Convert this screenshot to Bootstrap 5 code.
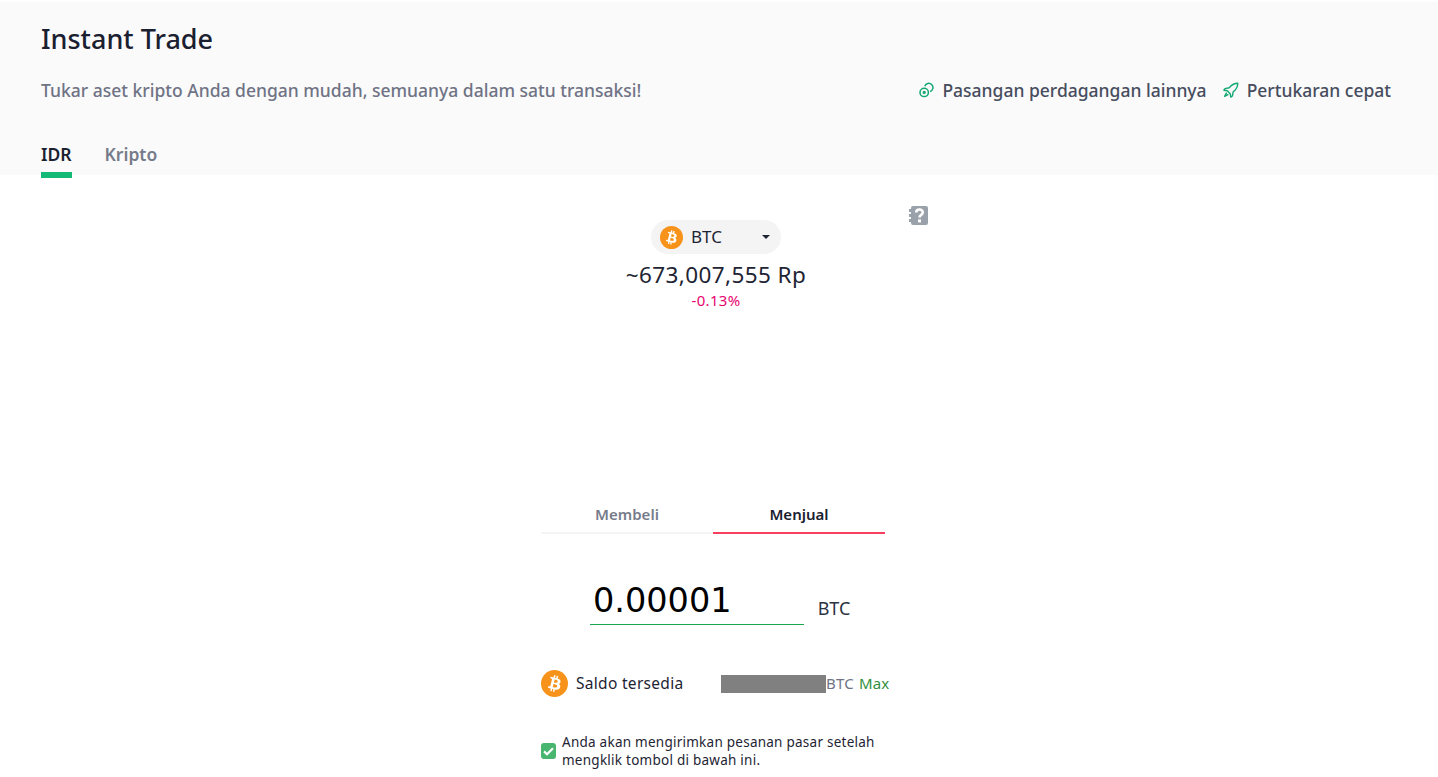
<!DOCTYPE html>
<html lang="en">

<head>
    <meta charset="UTF-8">
    <meta name="viewport" content="width=device-width, initial-scale=1.0">
    <title>Instant Trade</title>
    <link href="https://cdn.jsdelivr.net/npm/bootstrap@5.3.1/dist/css/bootstrap.min.css" rel="stylesheet">
    <style>
        body {
            font-family: "Noto Sans", "Liberation Sans", sans-serif;
            color: #1e2433;
            background: #fff;
            height: 777px;
            overflow: hidden;
        }

        .top-head {
            margin-top: 2px;
            height: 173px;
            background: #fafafa;
            padding: 19px 47px 0 41px;
        }

        .head-title {
            font-size: 27px;
            line-height: 36px;
            font-weight: 500;
            margin: 0 0 20px;
            color: #1a2030;
        }

        .head-sub {
            font-size: 17.5px;
            line-height: 26px;
            font-weight: 500;
            color: #6f7385;
        }

        .head-link {
            font-size: 17.5px;
            line-height: 26px;
            font-weight: 500;
            color: #474d5e;
            text-decoration: none;
        }

        .head-tabs {
            margin-top: 38px;
            gap: 33px;
        }

        .head-tab {
            font-size: 17.5px;
            line-height: 26px;
            font-weight: 600;
            color: #767b8a;
            padding-bottom: 5px;
            text-decoration: none;
        }

        .head-tab.on {
            color: #1a2030;
            border-bottom: 6px solid #13ba75;
        }

        .quote-wrap {
            width: 424px;
            margin-left: 504px;
            height: 325px;
            padding-top: 45px;
        }

        .help-icon {
            position: absolute;
            top: 30px;
            right: 0;
        }

        .coin-pick {
            width: 130px;
            height: 34px;
            border-radius: 17px;
            background: #f4f4f5;
            padding: 0 11px 0 9px;
            font-size: 17px;
        }

        .caret-down {
            width: 0;
            height: 0;
            border: 4px solid transparent;
            border-top: 4px solid #1e2433;
            border-bottom: 0;
        }

        .price-line {
            font-size: 22.5px;
            line-height: 30px;
            margin-top: 6px;
            letter-spacing: .4px;
        }

        .change-line {
            font-size: 15px;
            line-height: 20px;
            color: #e8046f;
            letter-spacing: .3px;
        }

        .trade-box {
            width: 344px;
            margin-left: 541px;
        }

        .side-tab {
            width: 50%;
            height: 34px;
            font-size: 15px;
            font-weight: 600;
            line-height: 28px;
            text-align: center;
            color: #767b8a;
            border-bottom: 2px solid #f4f4f5;
        }

        .side-tab.on {
            color: #1a2030;
            border-bottom-color: #f8405e;
        }

        .amount-row {
            margin-top: 46px;
            padding-left: 49px;
        }

        .amount-val {
            width: 214px;
            height: 45px;
            line-height: 42px;
            font-family: "DejaVu Sans", sans-serif;
            font-size: 33.5px;
            color: #000;
            padding-left: 3px;
            border-bottom: 1px solid #1ba64f;
        }

        .amount-unit {
            font-size: 18px;
            margin-left: 0;
            padding-left: 0;
            width: 60px;
            text-align: center;
            margin-bottom: 3px;
            color: #2c3242;
        }

        .balance-row {
            margin-top: 45px;
            width: 360px;
            font-size: 15.5px;
            line-height: 27px;
        }

        .balance-label {
            width: 153px;
            padding-left: 8px;
            letter-spacing: .3px;
        }

        .hidden-amt {
            width: 105px;
            height: 18px;
            background: #808080;
        }

        .balance-unit {
            color: #6f7385;
            font-size: 15px;
            letter-spacing: .2px;
        }

        .balance-max {
            color: #2f8f3f;
            font-size: 15px;
            margin-left: 5px;
            letter-spacing: .2px;
        }

        .confirm-row {
            margin-top: 36px;
            font-size: 13.5px;
            line-height: 18px;
            color: #1e2433;
            width: 345px;
            letter-spacing: .25px;
        }

        .tick-box {
            width: 15px;
            height: 16px;
            border-radius: 3px;
            background: #48b66f;
            margin-right: 6px;
            flex: none;
        }
    </style>
</head>

<body>
    <div class="top-head">
        <h1 class="head-title">Instant Trade</h1>
        <div class="d-flex justify-content-between align-items-center">
            <div class="head-sub">Tukar aset kripto Anda dengan mudah, semuanya dalam satu transaksi!</div>
            <div class="d-flex align-items-center gap-3">
                <a class="head-link d-flex align-items-center gap-2" href="#">
                    <svg width="15" height="16" viewBox="0 0 15 16" fill="none" stroke="#13a873" stroke-width="1.5">
                        <circle cx="5.2" cy="10.4" r="4.2" />
                        <circle cx="5.2" cy="10.4" r=".9" />
                        <path d="M5.8 4.2A4.2 4.2 0 1 1 11 9.6" />
                    </svg>
                    Pasangan perdagangan lainnya
                </a>
                <a class="head-link d-flex align-items-center gap-2" href="#">
                    <svg width="16" height="16" viewBox="0 0 16 16" fill="none" stroke="#13a873" stroke-width="1.4" stroke-linejoin="round">
                        <path d="M14.8 1.2c-3.6.1-6.3 1.5-8.6 4.6L2 6.6 .9 8.2l3.4.6 2.9 2.9.6 3.4 1.6-1.1.8-4.2c3.1-2.3 4.5-5 4.6-8.6z" />
                        <path d="M3.6 10.6 1.6 14.4l3.8-2" />
                    </svg>
                    Pertukaran cepat
                </a>
            </div>
        </div>
        <div class="head-tabs d-flex">
            <a class="head-tab on" href="#">IDR</a>
            <a class="head-tab" href="#">Kripto</a>
        </div>
    </div>

    <div class="quote-wrap position-relative d-flex flex-column align-items-center">
        <svg class="help-icon" width="19" height="21" viewBox="0 0 19 21">
            <path fill="#9aa1ab" d="M4 1h13a2 2 0 0 1 2 2v15a2 2 0 0 1-2 2H4a2 2 0 0 1-2-2v-1H.5a.5.5 0 0 1 0-3H2v-2H.5a.5.5 0 0 1 0-3H2V7H.5a.5.5 0 0 1 0-3H2V3a2 2 0 0 1 2-2z" />
            <path fill="none" stroke="#fff" stroke-width="2.6" d="M7.2 7.6c0-4 6.6-4 6.6-.2 0 2.6-3.3 2.4-3.3 5.2" />
            <rect x="9" y="14.4" width="3" height="3" fill="#fff" />
        </svg>
        <div class="coin-pick d-flex align-items-center">
            <svg width="23" height="23" viewBox="0 0 32 32">
                <circle cx="16" cy="16" r="16" fill="#f7931a" />
                <path fill="#fff" d="M23.189 14.02c.314-2.096-1.283-3.223-3.465-3.975l.708-2.84-1.728-.43-.69 2.765c-.454-.114-.92-.22-1.385-.326l.695-2.783L15.596 6l-.708 2.839c-.376-.086-.746-.17-1.104-.26l.002-.009-2.384-.595-.46 1.846s1.283.294 1.256.312c.7.175.826.638.805 1.006l-.806 3.235c.048.012.11.03.18.057l-.183-.045-1.13 4.532c-.086.212-.303.531-.793.41.018.025-1.256-.313-1.256-.313l-.858 1.978 2.25.561c.418.105.828.215 1.231.318l-.715 2.872 1.727.43.708-2.84c.472.127.93.245 1.378.357l-.706 2.828 1.728.43.715-2.866c2.948.558 5.164.333 6.097-2.333.752-2.146-.037-3.385-1.588-4.192 1.13-.26 1.98-1.003 2.207-2.538zm-3.95 5.538c-.533 2.147-4.148.986-5.32.695l.95-3.805c1.172.293 4.929.872 4.37 3.11zm.535-5.569c-.487 1.953-3.495.96-4.47.717l.86-3.45c.975.243 4.118.696 3.61 2.733z" />
            </svg>
            <span class="ms-2 flex-grow-1">BTC</span>
            <span class="caret-down"></span>
        </div>
        <div class="price-line">~673,007,555 Rp</div>
        <div class="change-line">-0.13%</div>
    </div>

    <div class="trade-box">
        <div class="d-flex">
            <div class="side-tab">Membeli</div>
            <div class="side-tab on">Menjual</div>
        </div>
        <div class="amount-row d-flex align-items-end">
            <div class="amount-val">0.00001</div>
            <div class="amount-unit">BTC</div>
        </div>
        <div class="balance-row d-flex align-items-center">
            <svg width="27" height="27" viewBox="0 0 32 32">
                <circle cx="16" cy="16" r="16" fill="#f7931a" />
                <path fill="#fff" d="M23.189 14.02c.314-2.096-1.283-3.223-3.465-3.975l.708-2.84-1.728-.43-.69 2.765c-.454-.114-.92-.22-1.385-.326l.695-2.783L15.596 6l-.708 2.839c-.376-.086-.746-.17-1.104-.26l.002-.009-2.384-.595-.46 1.846s1.283.294 1.256.312c.7.175.826.638.805 1.006l-.806 3.235c.048.012.11.03.18.057l-.183-.045-1.13 4.532c-.086.212-.303.531-.793.41.018.025-1.256-.313-1.256-.313l-.858 1.978 2.25.561c.418.105.828.215 1.231.318l-.715 2.872 1.727.43.708-2.84c.472.127.93.245 1.378.357l-.706 2.828 1.728.43.715-2.866c2.948.558 5.164.333 6.097-2.333.752-2.146-.037-3.385-1.588-4.192 1.13-.26 1.98-1.003 2.207-2.538zm-3.95 5.538c-.533 2.147-4.148.986-5.32.695l.95-3.805c1.172.293 4.929.872 4.37 3.11zm.535-5.569c-.487 1.953-3.495.96-4.47.717l.86-3.45c.975.243 4.118.696 3.61 2.733z" />
            </svg>
            <span class="balance-label">Saldo tersedia</span>
            <span class="hidden-amt"></span>
            <span class="balance-unit">BTC</span>
            <span class="balance-max">Max</span>
        </div>
        <div class="confirm-row d-flex align-items-center">
            <span class="tick-box d-flex align-items-center justify-content-center">
                <svg width="11" height="9" viewBox="0 0 11 9" fill="none" stroke="#fff" stroke-width="2.2">
                    <path d="M1 4.4 4 7.2 10 1.2" />
                </svg>
            </span>
            <span>Anda akan mengirimkan pesanan pasar setelah<br>mengklik tombol di bawah ini.</span>
        </div>
    </div>

    <script src="https://cdn.jsdelivr.net/npm/bootstrap@5.3.1/dist/js/bootstrap.bundle.min.js"></script>
</body>

</html>
